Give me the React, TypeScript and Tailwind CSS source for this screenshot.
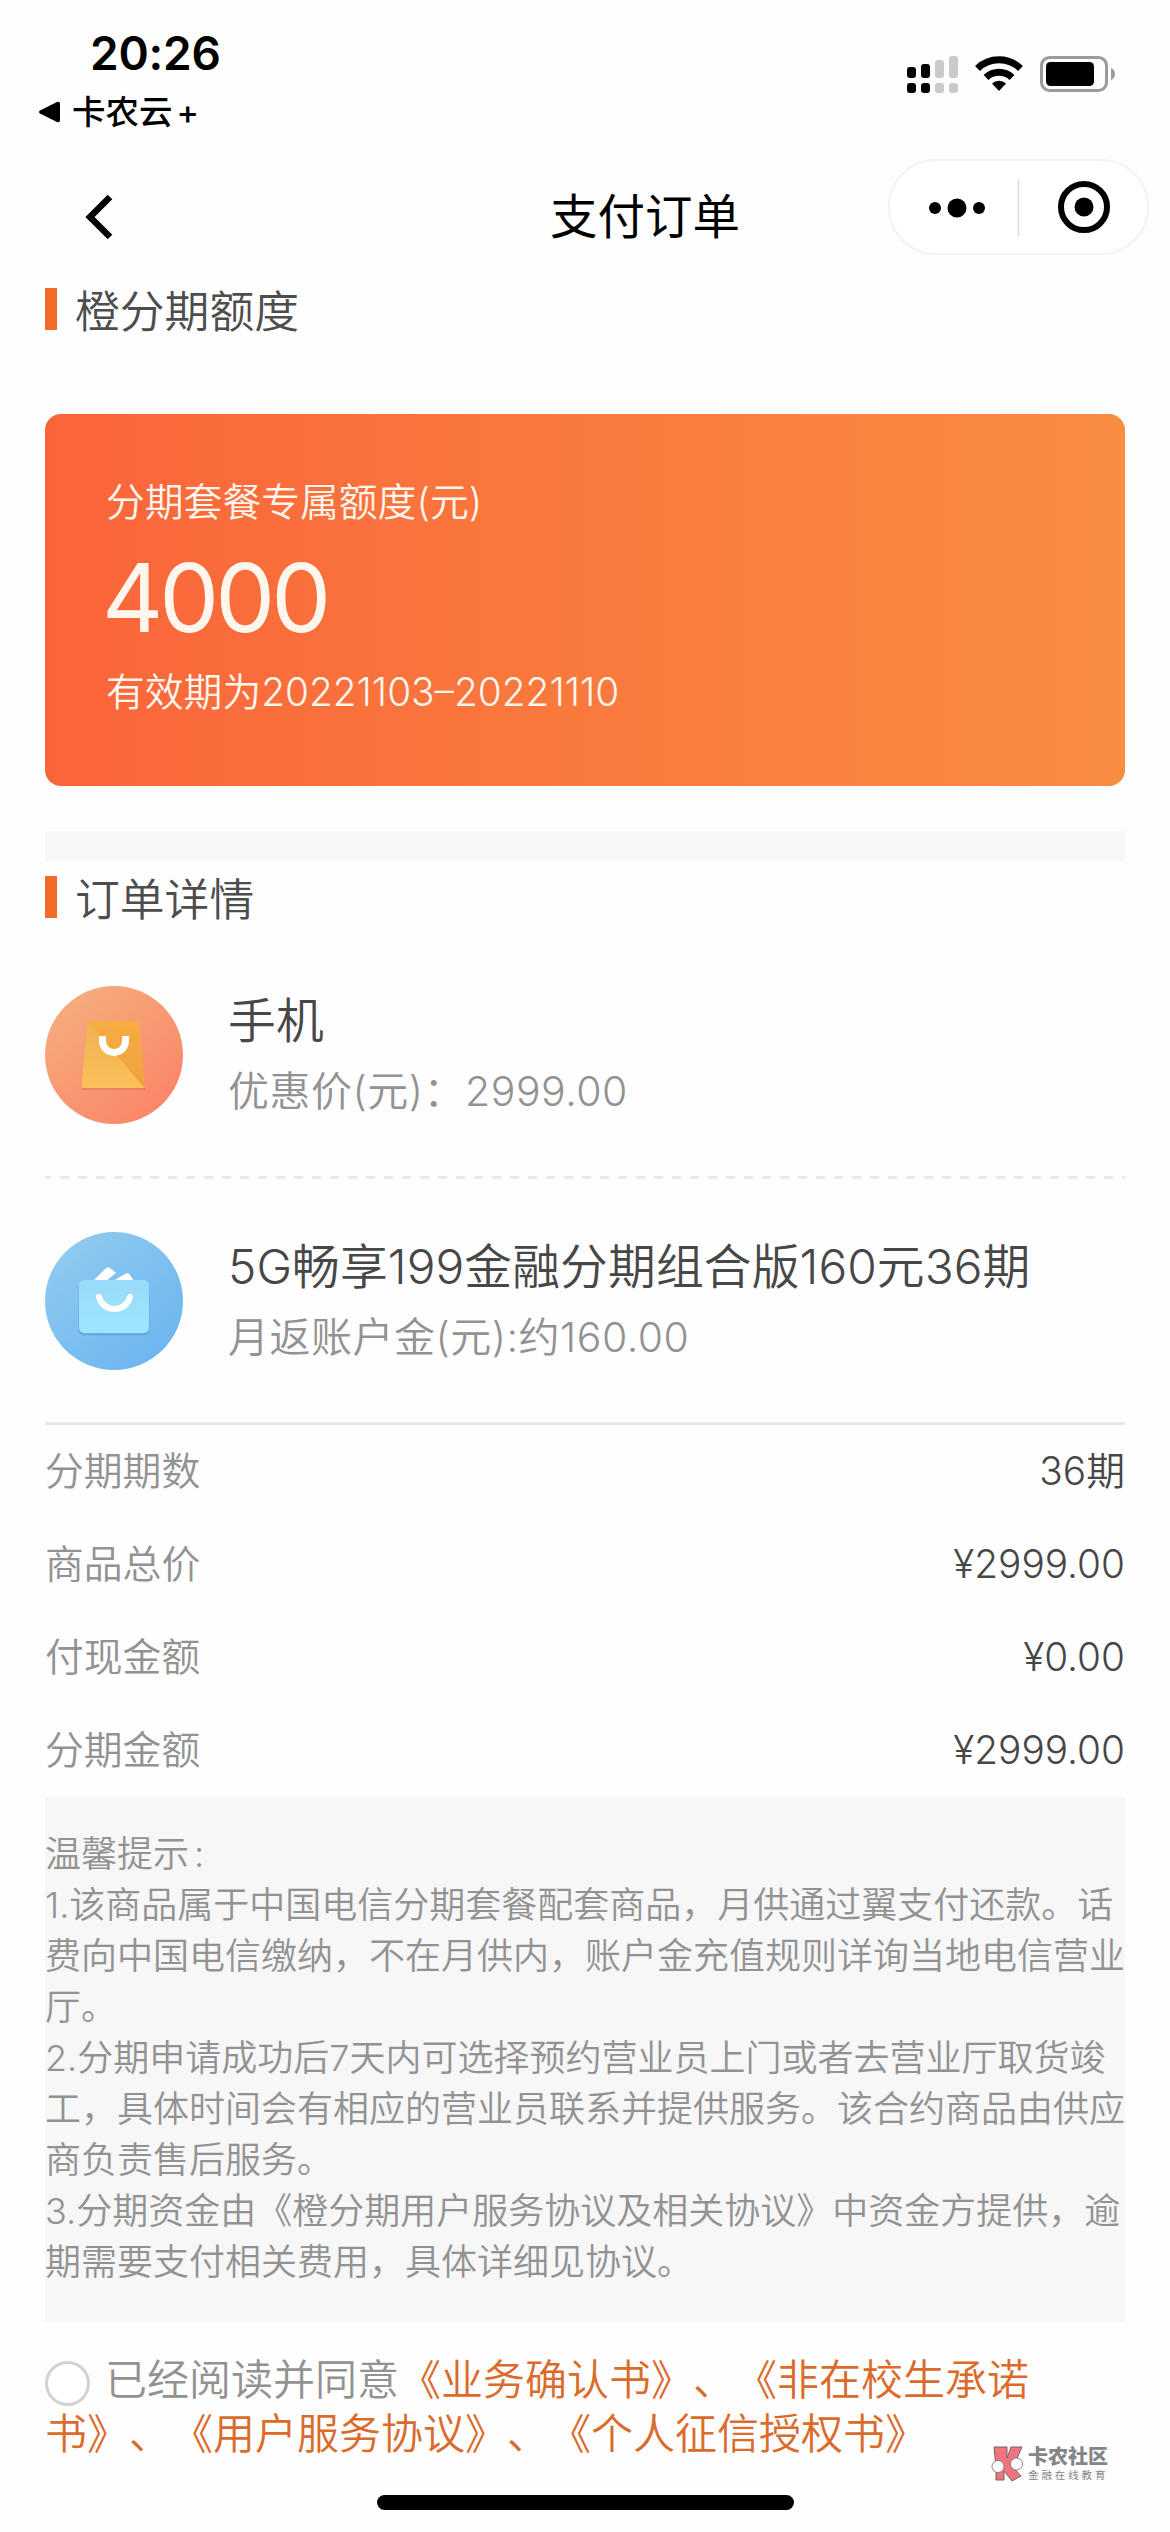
import React from 'react';

const details = [
  { label: '分期期数', value: '36期' },
  { label: '商品总价', value: '¥2999.00' },
  { label: '付现金额', value: '¥0.00' },
  { label: '分期金额', value: '¥2999.00' },
];

const tips = [
  '1.该商品属于中国电信分期套餐配套商品，月供通过翼支付还款。话',
  '费向中国电信缴纳，不在月供内，账户金充值规则详询当地电信营业',
  '厅。',
  '2.分期申请成功后7天内可选择预约营业员上门或者去营业厅取货竣',
  '工，具体时间会有相应的营业员联系并提供服务。该合约商品由供应',
  '商负责售后服务。',
  '3.分期资金由《橙分期用户服务协议及相关协议》中资金方提供，逾',
  '期需要支付相关费用，具体详细见协议。',
];

const StatusIcons = () => (
  <svg className="block w-[210px] h-[40px]" viewBox="906 54 210 40">
    <g fill="#000">
      <rect x="907" y="67" width="9" height="11" rx="3" />
      <rect x="921" y="64" width="9" height="14" rx="3" />
      <rect x="907" y="83" width="9" height="10" rx="3" />
      <rect x="921" y="83" width="9" height="10" rx="3" />
    </g>
    <g fill="#cacaca">
      <rect x="935" y="60" width="9" height="18" rx="3" />
      <rect x="949" y="56" width="9" height="22" rx="3" />
      <rect x="935" y="83" width="9" height="10" rx="3" />
      <rect x="949" y="83" width="9" height="10" rx="3" />
    </g>
    <g fill="none" stroke="#000" strokeWidth="7">
      <path d="M977.5 68.500A31 31 0 0 1 1020.500 68.500" />
      <path d="M986 77.500A19 19 0 0 1 1012 77.500" />
    </g>
    <path d="M992 83.500a10.500 10.500 0 0 1 14 0l-7 7.500z" />
    <rect x="1041.500" y="57.500" width="65" height="33" rx="8" fill="none" stroke="#9b9b9b" strokeWidth="3" />
    <rect x="1046" y="62" width="48" height="24" rx="4.500" />
    <path d="M1111 68c5.300 2.300 5.300 9.700 0 12z" fill="#9b9b9b" />
  </svg>
);

const OrangeBag = () => (
  <svg className="w-[138px] h-[138px] shrink-0" viewBox="0 0 138 138">
    <defs>
      <linearGradient id="obg" x1="0.1" y1="0.1" x2="0.8" y2="0.95">
        <stop offset="0" stopColor="#f5ad7d" />
        <stop offset="1" stopColor="#fb8568" />
      </linearGradient>
      <linearGradient id="obag" x1="0" y1="0" x2="0" y2="1">
        <stop offset="0" stopColor="#f0b050" />
        <stop offset="1" stopColor="#fcc05c" />
      </linearGradient>
      <linearGradient id="ofold" x1="0" y1="0" x2="0" y2="1">
        <stop offset="0" stopColor="#f6ad42" />
        <stop offset="1" stopColor="#f0a040" />
      </linearGradient>
    </defs>
    <circle cx="69" cy="69" r="69" fill="url(#obg)" />
    <path d="M37 100h63v4H37z" fill="#c96a3f" opacity=".35" />
    <path d="M42.500 35h51.500l5.500 67H36.500z" fill="url(#obag)" />
    <path d="M42.500 35h51.500l5.500 67z" fill="url(#ofold)" />
    <path d="M57.500 50v5a11.500 11.500 0 0 0 23 0v-5" fill="none" stroke="#fff" strokeWidth="7" />
  </svg>
);

const BlueBag = () => (
  <svg className="w-[138px] h-[138px] shrink-0" viewBox="0 0 138 138">
    <defs>
      <linearGradient id="bbg" x1="0.1" y1="0.1" x2="0.8" y2="0.95">
        <stop offset="0" stopColor="#90caef" />
        <stop offset="1" stopColor="#6cb6f0" />
      </linearGradient>
      <linearGradient id="bbag" x1="0" y1="0" x2="0" y2="1">
        <stop offset="0" stopColor="#97dafa" />
        <stop offset="1" stopColor="#9ee6fe" />
      </linearGradient>
    </defs>
    <circle cx="69" cy="69" r="69" fill="url(#bbg)" />
    <path d="M48 49 60 37q3-3 5-1l6 5-10 8zM68 49l12-7q4-2 5 1l4 6z" fill="#fff" />
    <rect x="33.500" y="50" width="71" height="53.500" rx="5" fill="#5696d8" opacity=".5" />
    <rect x="34" y="48" width="70" height="53" rx="5" fill="url(#bbag)" />
    <path d="M54 65c4 16 27 16 31 0" fill="none" stroke="#fff" strokeWidth="6" strokeLinecap="round" />
  </svg>
);

const SectionTitle = ({ children }: { children: React.ReactNode }) => (
  <div className="flex items-center h-[42px]">
    <div className="w-[12px] h-full bg-[#f36a2b]" />
    <h2 className="ml-[18px] mt-[5px] text-[44.800px] leading-[42px] text-[#4d4d4d]">{children}</h2>
  </div>
);

const Product = ({ icon, title, sub }: { icon: React.ReactNode; title: React.ReactNode; sub: React.ReactNode }) => (
  <div className="flex h-[138px]">
    {icon}
    <div className="ml-[45px] whitespace-nowrap">
      <p className="mt-[5px] text-[47.800px] leading-[60px] tracking-[0.080px] text-[#474747]">{title}</p>
      <p className="mt-[10px] text-[41px] leading-[60px] tracking-[0.500px] text-[#929292]">{sub}</p>
    </div>
  </div>
);

export default function App() {
  return (
    <div className="relative flex flex-col w-[1170px] h-[2532px] overflow-hidden bg-[#fefefe] font-['Inter','Noto_Sans_CJK_SC',sans-serif] font-[350] [text-spacing-trim:space-all]">
      {/* status bar */}
      <header className="flex justify-between h-[159px] shrink-0 pl-[38px] pr-[54px] text-black">
        <div>
          <div className="mt-[24px] ml-[52px] text-[46px] leading-[58px] font-semibold tracking-[-0.200px]">20:26</div>
          <div className="flex items-center mt-[3px] h-[54px]">
            <svg className="w-[22px] h-[22px]" viewBox="0 0 22 22">
              <path d="M2 9.500 19 1q3-1 3 2v16q0 3-3 2L2 12.500q-2-1.500 0-3z" />
            </svg>
            <span className="ml-[12px] text-[33.500px] leading-[54px] font-medium whitespace-nowrap">卡农云<span className="ml-[4px]">+</span></span>
          </div>
        </div>
        <div className="pt-[54px]"><StatusIcons /></div>
      </header>

      {/* mini program nav */}
      <nav className="relative flex items-center justify-between h-[96px] shrink-0 pl-[84px] pr-[21px]">
        <svg className="w-[30px] h-[48px] mt-[20px]" viewBox="0 0 30 48">
          <path d="M26 4 6 24l20 20" fill="none" stroke="#000" strokeWidth="6.500" />
        </svg>
        <h1 className="absolute left-[550px] top-[30px] text-[47.500px] leading-[56px] text-black font-normal whitespace-nowrap">支付订单</h1>
        <div className="flex items-center w-[261px] h-[96px] rounded-full border-2 border-[#f3f3f3] bg-white">
          <svg className="w-[257px] h-[92px]" viewBox="890 161 257 92">
            <circle cx="935" cy="208" r="6" />
            <circle cx="957" cy="208" r="9.500" />
            <circle cx="979" cy="208" r="6" />
            <path d="M1018.500 179v57" stroke="#dcdcdc" strokeWidth="1.500" />
            <circle cx="1084" cy="207" r="23" fill="none" stroke="#000" strokeWidth="6" />
            <circle cx="1084" cy="207" r="9.500" />
          </svg>
        </div>
      </nav>

      <main className="flex flex-col px-[45px] pt-[33px]">
        <SectionTitle>橙分期额度</SectionTitle>

        <section className="mt-[84px] h-[372px] rounded-[16px] pl-[61px] pt-[58px] bg-gradient-to-r from-[#fa643a] to-[#f88d40] text-[#fff6ee] whitespace-nowrap">
          <p className="text-[38.800px] leading-[60px]">分期套餐专属额度(元)</p>
          <p className="mt-[12px] -ml-[4px] text-[95px] leading-[108px] tracking-[-4px] font-normal">4000</p>
          <p className="mt-[10px] text-[38.800px] leading-[60px]">有效期为20221103–20221110</p>
        </section>

        <div className="mt-[45px] h-[30px] bg-[#f7f7f7]" />

        <div className="mt-[15px]"><SectionTitle>订单详情</SectionTitle></div>

        <div className="mt-[68px]">
          <Product icon={<OrangeBag />} title="手机" sub="优惠价(元)：2999.00" />
        </div>
        <div className="mt-[52px] h-[3px] bg-[repeating-linear-gradient(90deg,#e9e9e9_0_6px,transparent_6px_15px,#e9e9e9_15px_18px)]" />
        <div className="mt-[53px]">
          <Product icon={<BlueBag />} title="5G畅享199金融分期组合版160元36期" sub="月返账户金(元):约160.00" />
        </div>
        <div className="mt-[52px] h-[3px] bg-[#e8e8e8]" />

        <dl className="flex flex-col h-[372px]">
          {details.map((d) => (
            <div key={d.label} className="flex items-center justify-between h-[93px] text-[38.800px]">
              <dt className="text-[#929292]">{d.label}</dt>
              <dd className="text-[#474747]">{d.value}</dd>
            </div>
          ))}
        </dl>

        <section className="h-[525px] pt-[32px] bg-[#f7f7f7] text-[36px] leading-[51px] text-[#929292] whitespace-nowrap">
          <p>温馨提示<span className="ml-[5px]">:</span></p>
          {tips.map((t) => <p key={t}>{t}</p>)}
        </section>

        <div className="mt-[31px] text-[42px] leading-[54px] text-[#db6b2b] whitespace-nowrap">
          <div className="flex items-center">
            <span className="w-[45px] h-[45px] mt-[6px] rounded-full border-[3px] border-[#d2d2d2] bg-white" />
            <span className="ml-[15px] text-[#929292]">已经阅读并同意</span>
            <span>《业务确认书》、《非在校生承诺</span>
          </div>
          <p>书》、《用户服务协议》、《个人征信授权书》</p>
        </div>
      </main>

      {/* community watermark */}
      <div className="absolute left-[990px] top-[2446px] flex items-center gap-[4px] text-[#858585] whitespace-nowrap">
        <svg className="w-[34px] h-[36px]" viewBox="0 0 34 36">
          <g fill="#ee7480" stroke="#7d6063" strokeWidth="1">
            <path d="M4 1h13v11l4-11h11l-7 16-3 3 9 10-9 5-8-10v9H6V21z" />
          </g>
          <g fill="#fff" stroke="#8d8182" strokeWidth="1">
            <circle cx="8" cy="20.500" r="6" />
            <circle cx="26.500" cy="18" r="6" />
          </g>
        </svg>
        <div>
          <p className="text-[20px] leading-[21px] font-black">卡农社区</p>
          <p className="mt-[1px] text-[10.500px] leading-[13px] tracking-[2.900px] font-normal">金融在线教育</p>
        </div>
      </div>

      {/* home indicator */}
      <div className="absolute left-[377px] top-[2495px] w-[417px] h-[15px] rounded-full bg-black" />
    </div>
  );
}
